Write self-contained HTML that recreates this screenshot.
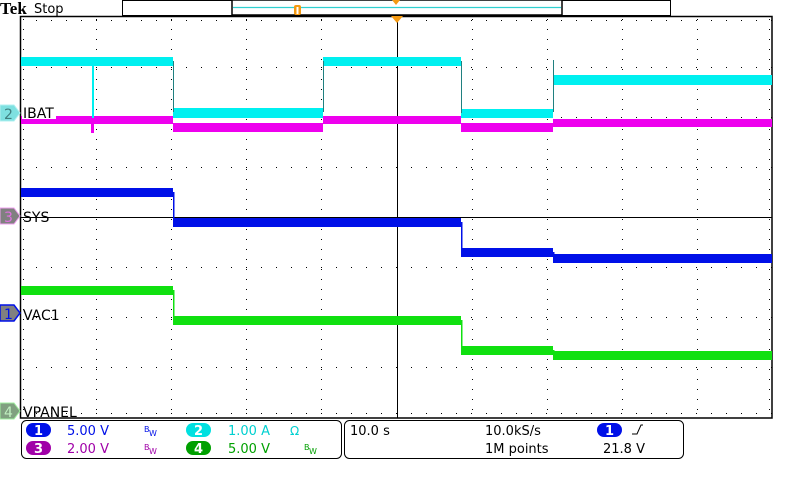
<!DOCTYPE html>
<html><head><meta charset="utf-8"><style>
html,body{margin:0;padding:0;background:#fff;width:800px;height:480px;overflow:hidden}
svg{display:block}
text{font-family:"DejaVu Sans","Liberation Sans",sans-serif}
</style></head><body>
<svg width="800" height="480" viewBox="0 0 800 480" xmlns="http://www.w3.org/2000/svg">
<text x="0" y="14" font-weight="bold" font-size="17" fill="#000" style="font-family:'Liberation Serif',serif">Tek</text>
<text x="34" y="13" font-size="13" fill="#000">Stop</text>
<rect x="122.5" y="0.5" width="548" height="15" fill="#fff" stroke="#000"/>
<rect x="232" y="0" width="330" height="15" fill="#fff" stroke="#000" stroke-width="1.5"/>
<line x1="233" y1="7.5" x2="561" y2="7.5" stroke="#30d0d0" stroke-width="1.2"/>
<rect x="294" y="5" width="7" height="10" rx="2" fill="#f59a12"/>
<rect x="296.5" y="7" width="2" height="7" fill="#fff"/>
<polygon points="392,0 400,0 396,5" fill="#f59a12"/>
<g stroke="#000" stroke-width="1" stroke-dasharray="1 9">
<line x1="96.5" y1="19" x2="96.5" y2="417"/><line x1="171.5" y1="19" x2="171.5" y2="417"/>
<line x1="246.5" y1="19" x2="246.5" y2="417"/><line x1="321.5" y1="19" x2="321.5" y2="417"/>
<line x1="472.5" y1="19" x2="472.5" y2="417"/><line x1="547.5" y1="19" x2="547.5" y2="417"/>
<line x1="622.5" y1="19" x2="622.5" y2="417"/><line x1="697.5" y1="19" x2="697.5" y2="417"/>
<line x1="23.5" y1="19" x2="23.5" y2="417"/><line x1="769.5" y1="19" x2="769.5" y2="417"/>
</g>
<g stroke="#000" stroke-width="1" stroke-dasharray="1 14">
<line x1="36" y1="67.5" x2="772" y2="67.5"/><line x1="36" y1="117.5" x2="772" y2="117.5"/>
<line x1="36" y1="167.5" x2="772" y2="167.5"/><line x1="36" y1="267.5" x2="772" y2="267.5"/>
<line x1="36" y1="317.5" x2="772" y2="317.5"/><line x1="36" y1="367.5" x2="772" y2="367.5"/>
<line x1="36" y1="20.5" x2="772" y2="20.5"/><line x1="36" y1="413.5" x2="772" y2="413.5"/>
</g>
<line x1="21" y1="217.5" x2="772" y2="217.5" stroke="#000"/>
<line x1="397.5" y1="16" x2="397.5" y2="418" stroke="#000"/>
<rect x="20.5" y="16.5" width="751.5" height="401.5" fill="none" stroke="#000" stroke-width="1.5"/>
<polygon points="391,16 403,16 397,23" fill="#f59a12"/>
<g fill="#ee00ee">
<rect x="21" y="116" width="152" height="8"/>
<rect x="173" y="123" width="150" height="9"/>
<rect x="323" y="116" width="138" height="8"/>
<rect x="461" y="123" width="92" height="9"/>
<rect x="553" y="119" width="219" height="8"/>
<rect x="91" y="117" width="3" height="16"/>
</g>
<g fill="#00f0f0">
<rect x="21" y="57" width="152" height="9"/>
<rect x="173" y="108" width="150" height="10"/>
<rect x="323" y="57" width="138" height="9"/>
<rect x="461" y="109" width="92" height="9"/>
<rect x="553" y="75" width="219" height="10"/>
<rect x="92" y="58" width="2" height="60"/>
</g>
<g stroke="#208080" stroke-width="1">
<line x1="173.5" y1="61" x2="173.5" y2="112"/><line x1="323.5" y1="61" x2="323.5" y2="112"/>
<line x1="461.5" y1="61" x2="461.5" y2="113"/><line x1="553.5" y1="60" x2="553.5" y2="112"/>
</g>
<g fill="#0010e8">
<rect x="21" y="188" width="152" height="9"/>
<rect x="173" y="218" width="288" height="9"/>
<rect x="461" y="248" width="92" height="9"/>
<rect x="553" y="254" width="219" height="9"/>
<rect x="173" y="192" width="1.5" height="30"/>
<rect x="461" y="222" width="1.5" height="30"/>
<rect x="553" y="252" width="1.5" height="6"/>
</g>
<g fill="#10e010">
<rect x="21" y="286" width="152" height="9"/>
<rect x="173" y="316" width="288" height="9"/>
<rect x="461" y="346" width="92" height="9"/>
<rect x="553" y="351" width="219" height="9"/>
<rect x="173" y="290" width="1.5" height="30"/>
<rect x="461" y="320" width="1.5" height="30"/>
<rect x="553" y="350" width="1.5" height="6"/>
</g>
<rect x="22" y="104" width="34" height="15" fill="#fff"/>
<text x="23" y="118" font-size="14" fill="#000">IBAT</text>
<text x="23" y="222" font-size="14" fill="#000">SYS</text>
<text x="23" y="320" font-size="14" fill="#000">VAC1</text>
<text x="23" y="417" font-size="14" fill="#000">VPANEL</text>
<polygon points="0,105 14,105 20,113 14,121 0,121" fill="#7ee0e0" stroke="#b0f0f0"/>
<text x="4" y="119" font-size="14" fill="#408080">2</text>
<polygon points="0,208 14,208 20,216 14,224 0,224" fill="#808080" stroke="#f0a0f0"/>
<text x="4" y="222" font-size="14" fill="#e070e0">3</text>
<polygon points="0,305 14,305 20,313 14,321 0,321" fill="#808080" stroke="#0010e8" stroke-width="1.5"/>
<text x="4" y="319" font-size="14" fill="#0010e8">1</text>
<polygon points="0,403 14,403 20,411 14,419 0,419" fill="#80a080" stroke="#a0f0a0"/>
<text x="4" y="417" font-size="14" fill="#c0f0c0">4</text>
<rect x="21.5" y="420.5" width="320" height="38" rx="5" fill="#fff" stroke="#000"/>
<rect x="344.5" y="420.5" width="339" height="38" rx="5" fill="#fff" stroke="#000"/>
<rect x="26" y="423" width="25" height="14" rx="7" fill="#0010e8"/>
<text x="34" y="435" font-size="13" font-weight="bold" fill="#fff">1</text>
<text x="67" y="435" font-size="13" fill="#0010e8">5.00 V</text>
<text x="144" y="432" font-size="8" fill="#0010e8">B</text><text x="149" y="436" font-size="8" fill="#0010e8">W</text>
<rect x="186" y="423" width="25" height="14" rx="7" fill="#00e0e0"/>
<text x="194" y="435" font-size="13" font-weight="bold" fill="#fff">2</text>
<text x="228" y="435" font-size="13" fill="#00d0d0">1.00 A</text>
<text x="290" y="435" font-size="12" fill="#00d0d0">Ω</text>
<rect x="26" y="441" width="25" height="14" rx="7" fill="#a000a8"/>
<text x="34" y="453" font-size="13" font-weight="bold" fill="#fff">3</text>
<text x="67" y="453" font-size="13" fill="#a000a8">2.00 V</text>
<text x="144" y="450" font-size="8" fill="#a000a8">B</text><text x="149" y="454" font-size="8" fill="#a000a8">W</text>
<rect x="186" y="441" width="25" height="14" rx="7" fill="#00a000"/>
<text x="194" y="453" font-size="13" font-weight="bold" fill="#fff">4</text>
<text x="228" y="453" font-size="13" fill="#00a000">5.00 V</text>
<text x="304" y="450" font-size="8" fill="#00a000">B</text><text x="309" y="454" font-size="8" fill="#00a000">W</text>
<text x="350" y="435" font-size="13" fill="#000">10.0 s</text>
<text x="485" y="435" font-size="13" fill="#000">10.0kS/s</text>
<text x="485" y="453" font-size="13" fill="#000">1M points</text>
<rect x="597" y="423" width="25" height="14" rx="7" fill="#0010e8"/>
<text x="605" y="435" font-size="13" font-weight="bold" fill="#fff">1</text>
<path d="M632 434 L637 434 L641 425 L643 425" fill="none" stroke="#000" stroke-width="1"/>
<text x="603" y="453" font-size="13" fill="#000">21.8 V</text>
</svg>
</body></html>
